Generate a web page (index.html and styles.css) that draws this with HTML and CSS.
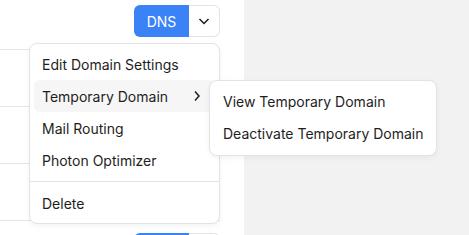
FILE: index.html
```html
<!DOCTYPE html>
<html>
<head>
<meta charset="utf-8">
<link rel="stylesheet" href="styles.css">
</head>
<body>
<div class="page">
  <main class="main">
    <div class="list">
      <div class="row">
        <div class="btn-group">
          <button class="btn-primary">DNS</button>
          <button class="btn-toggle"><svg width="16" height="16" viewBox="0 0 16 16"><path d="M3.5 6 L8 10.5 L12.5 6" fill="none" stroke="#1e1e1e" stroke-width="1.5"/></svg></button>
        </div>
      </div>
      <div class="row"><div class="btn-group"><button class="btn-primary"></button><button class="btn-toggle"></button></div></div>
      <div class="row"><div class="btn-group"><button class="btn-primary"></button><button class="btn-toggle"></button></div></div>
      <div class="row"><div class="btn-group"><button class="btn-primary"></button><button class="btn-toggle"></button></div></div>
      <div class="row"><div class="btn-group"><button class="btn-primary"></button><button class="btn-toggle"></button></div></div>
    </div>
    <div class="menu">
      <div class="item">Edit Domain Settings</div>
      <div class="item active">
        <span>Temporary Domain</span>
        <svg class="chev" width="16" height="16" viewBox="0 0 16 16"><path d="M6 3.5 L10 8 L6 12.5" fill="none" stroke="#1e1e1e" stroke-width="1.5"/></svg>
        <div class="menu submenu">
          <div class="item">View Temporary Domain</div>
          <div class="item">Deactivate Temporary Domain</div>
        </div>
      </div>
      <div class="item">Mail Routing</div>
      <div class="item">Photon Optimizer</div>
      <div class="divider"></div>
      <div class="item">Delete</div>
    </div>
  </main>
  <aside class="side"></aside>
</div>
</body>
</html>
```

FILE: styles.css
```css
* { box-sizing: border-box; }
html, body { margin: 0; padding: 0; }
body {
  font-family: Inter, "Noto Sans", sans-serif;
  font-size: 14px;
  color: #1e1e1e;
  overflow: hidden;
}
.page {
  display: flex;
  height: 235px;
  overflow: hidden;
}
.main {
  position: relative;
  width: 244px;
  background: #fff;
  flex: none;
}
.side {
  flex: 1;
  background: #f2f2f2;
}
.list {
  margin-top: -7px;
  width: 220px;
}
.row {
  height: 57px;
  border-bottom: 1px solid #e6e6e6;
  display: flex;
  align-items: center;
  justify-content: flex-end;
}
.btn-group {
  display: flex;
  height: 32px;
}
.btn-primary {
  width: 55px;
  height: 32px;
  border: none;
  background: #3b82f6;
  color: #fff;
  font-family: inherit;
  font-size: 14px;
  border-radius: 6px 0 0 6px;
  padding: 0;
}
.btn-toggle {
  width: 31px;
  height: 32px;
  border: 1px solid #e3e3e3;
  border-left: none;
  background: #fff;
  border-radius: 0 6px 6px 0;
  padding: 0;
  display: flex;
  align-items: center;
  justify-content: center;
}
.menu {
  position: absolute;
  left: 29px;
  top: 43px;
  width: 191px;
  background: #fff;
  border: 1px solid #e3e3e3;
  border-radius: 8px;
  padding: 4px;
  box-shadow: 0 2px 6px rgba(0,0,0,0.05);
}
.item {
  position: relative;
  height: 32px;
  display: flex;
  align-items: center;
  justify-content: space-between;
  padding: 0 8px;
  border-radius: 6px;
  white-space: nowrap;
}
.item.active { background: #f6f6f6; }
.chev { flex: none; margin-right: 2px; }
.divider {
  height: 1px;
  background: #e3e3e3;
  margin: 5px -4px;
}
.submenu {
  left: calc(100% - 6px);
  top: 0;
  width: 228px;
  height: 76px;
  padding: 4px;
}
.submenu .item { padding-left: 9px; }
```
